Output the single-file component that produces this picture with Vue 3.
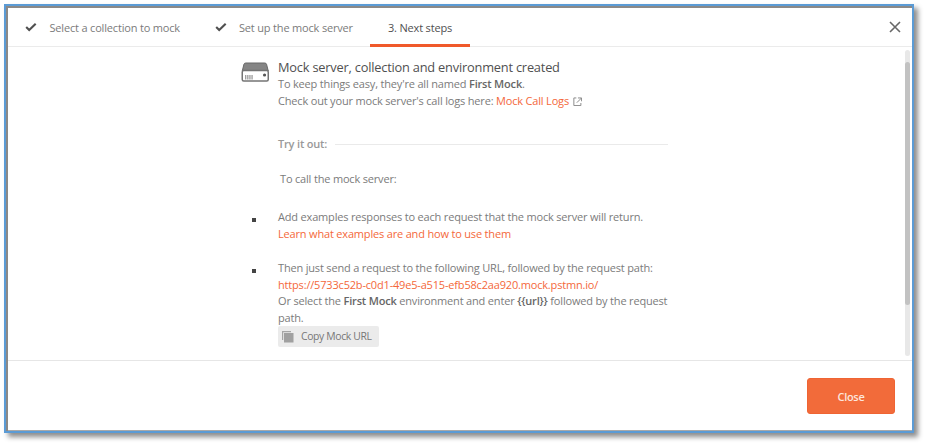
<script setup>
const steps = [
  { label: 'Select a collection to mock', done: true, name: 'collection' },
  { label: 'Set up the mock server', done: true, name: 'server' },
  { label: '3. Next steps', done: false, name: 'next' },
]
const mockUrl = 'https://5733c52b-c0d1-49e5-a515-efb58c2aa920.mock.pstmn.io/'
</script>

<template>
  <div class="page">
    <section class="dialog">
      <header class="header">
        <nav class="steps">
          <div v-for="step in steps" :key="step.name" class="step" :class="['step-' + step.name, { active: !step.done }]">
            <svg v-if="step.done" class="check" viewBox="0 0 12 10">
              <path d="M1.2 5 4.2 8 10.7 1.7" fill="none" stroke="#505050" stroke-width="2.1" />
            </svg>
            <span>{{ step.label }}</span>
          </div>
        </nav>
        <svg class="dismiss" viewBox="0 0 12 12">
          <path d="M1 1 11 11M11 1 1 11" fill="none" stroke="#686868" stroke-width="1.6" />
        </svg>
      </header>

      <main class="body">
        <div class="content">
          <div class="intro">
            <svg class="drive" viewBox="0 0 28 20">
              <path d="M4.5 1h19q1.4 0 1.8 1.3L27 9H1L2.7 2.3Q3.1 1 4.5 1z" fill="#858585" stroke="#686868" />
              <rect x="1" y="8.6" width="26" height="10.3" rx="1.5" fill="#fff" stroke="#747474" stroke-width="1.5" />
              <path d="M4.5 13v4.5M6.6 13v4.5M8.7 13v4.5M10.8 13v4.5" stroke="#888" stroke-width="1.1" />
              <circle cx="23.3" cy="13" r="1.6" fill="#555" />
            </svg>
            <div>
              <h1>Mock server, collection and environment created</h1>
              <p class="named">To keep things easy, they're all named <b>First Mock</b>.</p>
              <p class="logs">
                Check out your mock server's call logs here: <a>Mock Call Logs</a>
                <svg class="external" viewBox="0 0 10 10">
                  <path d="M3.5 1H.9v8h7.4V6.3M5.2 1H9v3.5M9 1 4 6" fill="none" stroke="#888" stroke-width="1" />
                </svg>
              </p>
            </div>
          </div>
          <div class="divider"><span>Try it out:</span><i></i></div>
          <p class="lead">To call the mock server:</p>
          <ul>
            <li class="examples">
              <p>Add examples responses to each request that the mock server will return.</p>
              <p class="learn"><a>Learn what examples are and how to use them</a></p>
            </li>
            <li class="request">
              <p>Then just send a request to the following URL, followed by the request path:</p>
              <p class="url"><a>{{ mockUrl }}</a></p>
              <p class="select">Or select the <b>First Mock</b> environment and enter <b v-pre>{{url}}</b> followed by the request<br>path.</p>
              <button class="copy">
                <svg viewBox="0 0 12 12">
                  <path d="M.6 9V.6H9" fill="none" stroke="#a5a5a5" stroke-width="1.2" />
                  <rect x="2" y="2" width="9.5" height="9.5" fill="#a0a0a0" />
                </svg>
                <span>Copy Mock URL</span>
              </button>
            </li>
          </ul>
        </div>
        <div class="track"><div class="thumb"></div></div>
      </main>

      <footer class="footer"><button class="close">Close</button></footer>
    </section>
  </div>
</template>

<style>
body { background: #fff; overflow: hidden; }
</style>

<style scoped>
* { box-sizing: border-box; }
.page {
  height: 446px;
  padding: 4px 13px 13px 4px;
  font: 11px/17px "Open Sans", "Noto Sans", sans-serif;
  letter-spacing: -.178px;
  color: #7b7b7b;
}
.dialog {
  display: flex;
  flex-direction: column;
  height: 429px;
  border: 2px solid #5b9bd5;
  background: #fff;
  box-shadow: inset 2px 2px 0 #8b8987, inset 0 -1px 0 #a9a9a9, 4px 4px 5px rgba(0, 0, 0, .45);
  padding: 2px 0 1px 2px;
}
.header {
  display: flex;
  justify-content: space-between;
  height: 39px;
  border-bottom: 1px solid #ebebeb;
}
.steps { display: flex; height: 39px; }
.step { display: flex; align-items: center; height: 39px; padding-bottom: 1px; white-space: nowrap; }
.step-collection { width: 189px; padding-left: 17px; }
.step-server { width: 173px; padding-left: 17.5px; }
.step-next { width: 100px; padding-left: 18px; }
.step.active { color: #505050; border-bottom: 3px solid #f0592a; padding: 2px 0 0 18px; }
.check { width: 12px; height: 10px; margin-right: 12.5px; flex: none; }
.dismiss { width: 12px; height: 12px; margin: 13px 11px 0 0; }
.body { display: flex; justify-content: space-between; height: 313px; }
.content { width: 430px; margin-left: 233px; padding-top: 12px; }
.intro { display: flex; }
.drive { width: 28.5px; height: 20px; margin: 3px 8.5px 0 0; flex: none; }
h1 { margin: 0; font-size: 12.8px; line-height: 16px; letter-spacing: -.2px; font-weight: 400; color: #505050; white-space: nowrap; }
p { margin: 0; white-space: nowrap; }
b { font-weight: 600; color: #666; }
a { color: #f4683a; }
.external { width: 9.5px; height: 9.5px; margin-left: 4px; vertical-align: -1px; }
.divider { display: flex; align-items: center; margin: 26px 0 0 37px; font-weight: 600; color: #999; width: 390px; }
.divider i { flex: 1; height: 1px; margin: 2px 0 0 8px; background: #eaeaea; }
.lead { margin: 18px 0 0 39px; }
ul { list-style: none; margin: 21px 0 0; padding: 0 0 0 37px; }
li { display: flow-root; }
li::before { content: ""; float: left; width: 4px; height: 4px; margin: 9.5px 0 0 -26px; background: #444; }
.request { margin-top: 17px; }
.select { line-height: 16.5px; }
.copy {
  display: flex;
  align-items: center;
  width: 101px;
  height: 21px;
  padding: 0 0 0 4px;
  border: 0;
  border-radius: 2px;
  background: #ebebeb;
  color: #777;
  font: 10.4px/17px "Open Sans", sans-serif;
  letter-spacing: -.35px;
}
.copy svg { width: 12px; height: 12px; margin-right: 7px; }
.copy span { white-space: nowrap; }
.track { width: 5px; height: 306px; margin: 3px 2px 0 0; border-radius: 3px; background: #e8e8e8; padding-top: 12px; }
.thumb { height: 243px; border-radius: 3px; background: #c2c2c2; }
.footer {
  display: flex;
  justify-content: flex-end;
  height: 70px;
  padding: 17px 17px 0 0;
  border-top: 1px solid #e6e6e6;
}
.close {
  width: 88px;
  height: 36px;
  padding: 0;
  border: 1px solid #ef6433;
  border-radius: 3px;
  background: #f26b3a;
  color: #fde6dd;
  font: 600 11px/17px "Open Sans", sans-serif;
  letter-spacing: -.3px;
}
</style>
